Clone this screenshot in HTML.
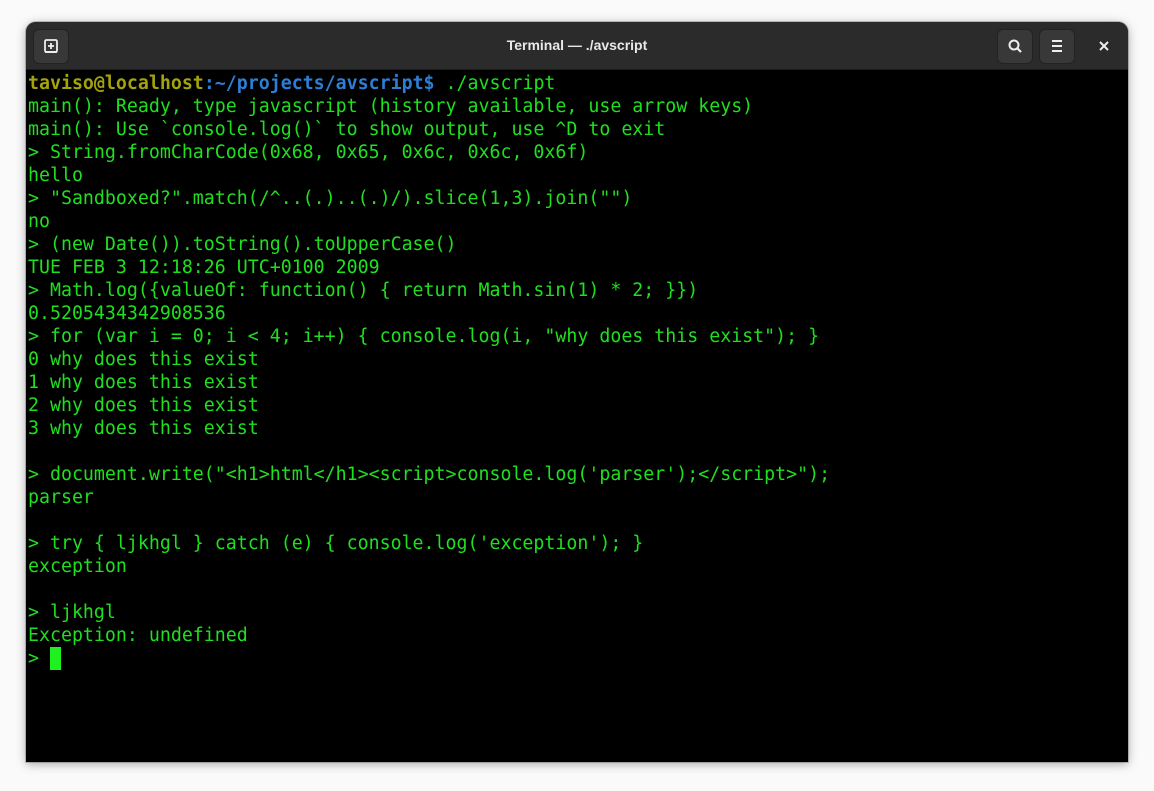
<!DOCTYPE html>
<html><head><meta charset="utf-8"><style>
html,body{margin:0;padding:0;width:1154px;height:791px;background:#fafafa;overflow:hidden}
.win{position:absolute;left:26px;top:22px;width:1102px;height:740px;background:#000;border-radius:10px 10px 0 0;overflow:hidden;box-shadow:0 2px 10px rgba(0,0,0,.35),0 0 0 1px rgba(0,0,0,.2)}
.tb{position:absolute;left:0;top:0;width:100%;height:47px;background:#2b2b2b;border-bottom:1px solid #1a1a1a}
.title{position:absolute;left:0;right:0;top:0;text-align:center;color:#e8e8e8;font:bold 14px "Liberation Sans",sans-serif;line-height:47px}
.btn{position:absolute;top:7px;width:34px;height:33px;background:#383838;border-radius:6px;border:1px solid #222}
.term{position:absolute;left:2px;top:50px;font-family:"DejaVu Sans Mono",monospace;font-size:18.25px;line-height:23px;color:#1fe01f;white-space:pre}
.y{color:#a3a30d;font-weight:bold}.b{color:#2d7ed4;font-weight:bold}
.cur{display:inline-block;width:11px;height:23px;background:#1ff01f;vertical-align:top}
</style></head><body>
<div class="win">
<div class="tb">
<div class="title">Terminal — ./avscript</div>
<div class="btn" style="left:7px"><svg width="34" height="33" viewBox="0 0 34 33"><rect x="11" y="10" width="12" height="12" rx="1.5" fill="none" stroke="#eee" stroke-width="1.8"/><path d="M17 13v6M14 16h6" stroke="#eee" stroke-width="1.8"/><path d="M11 22h12" stroke="#eee" stroke-width="2"/></svg></div>
<div class="btn" style="left:971px"><svg width="34" height="33" viewBox="0 0 34 33"><circle cx="16" cy="15" r="4.5" fill="none" stroke="#eee" stroke-width="2"/><path d="M19 18l4 4" stroke="#eee" stroke-width="2.2"/></svg></div>
<div class="btn" style="left:1013px"><svg width="34" height="33" viewBox="0 0 34 33"><path d="M12 11h10M12 16h10M12 21h10" stroke="#eee" stroke-width="2"/></svg></div>
<svg style="position:absolute;left:1072px;top:18px" width="12" height="12" viewBox="0 0 12 12"><path d="M2 2l8 8M10 2l-8 8" stroke="#eee" stroke-width="2"/></svg>
</div>
<div class="term"><span class="y">taviso@localhost</span><span class="b">:~/projects/avscript$</span> ./avscript
main(): Ready, type javascript (history available, use arrow keys)
main(): Use `console.log()` to show output, use ^D to exit
&gt; String.fromCharCode(0x68, 0x65, 0x6c, 0x6c, 0x6f)
hello
&gt; "Sandboxed?".match(/^..(.)..(.)/).slice(1,3).join("")
no
&gt; (new Date()).toString().toUpperCase()
TUE FEB 3 12:18:26 UTC+0100 2009
&gt; Math.log({valueOf: function() { return Math.sin(1) * 2; }})
0.5205434342908536
&gt; for (var i = 0; i &lt; 4; i++) { console.log(i, "why does this exist"); }
0 why does this exist
1 why does this exist
2 why does this exist
3 why does this exist

&gt; document.write("&lt;h1&gt;html&lt;/h1&gt;&lt;script&gt;console.log('parser');&lt;/script&gt;");
parser

&gt; try { ljkhgl } catch (e) { console.log('exception'); }
exception

&gt; ljkhgl
Exception: undefined
&gt; <span class="cur"></span></div>
</div>
</body></html>
